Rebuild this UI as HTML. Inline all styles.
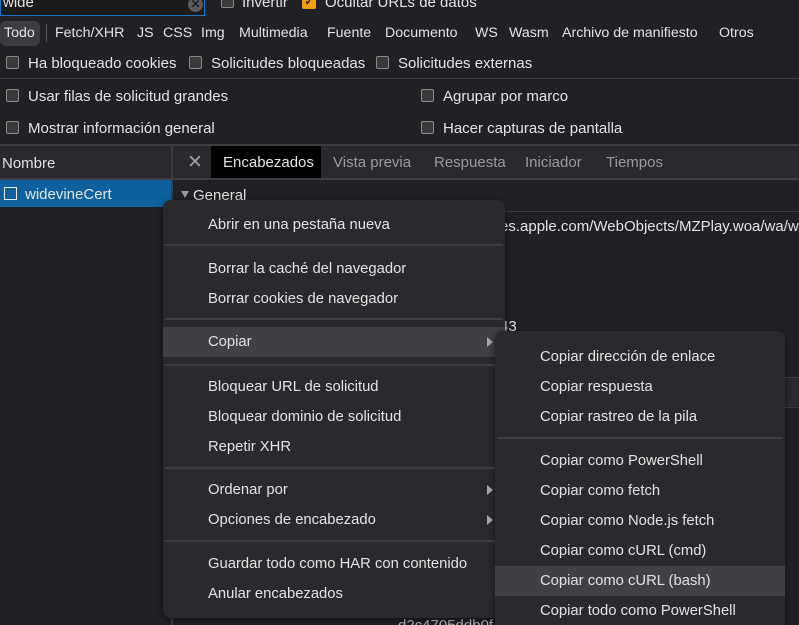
<!DOCTYPE html>
<html><head><meta charset="utf-8"><style>
*{box-sizing:border-box;margin:0;padding:0}
html{width:799px;height:625px;overflow:hidden}
body{width:799px;height:625px;overflow:hidden;background:#202124;font-family:"Liberation Sans",sans-serif;font-size:14.8px;color:#e3e3e3;position:relative}
.a{position:absolute;white-space:nowrap}
.cb{position:absolute;width:13px;height:13px;border:1px solid #8a8a8a;border-radius:2px;background:#3a3a3a}
.hl{position:absolute;height:1px;background:#3d3e42}
.menu{position:absolute;background:#292a2d;border-radius:8px;box-shadow:0 2px 8px rgba(0,0,0,.5);overflow:hidden}
.mi{position:absolute;left:0;right:0;height:30px;line-height:31px;white-space:nowrap}
.sep{position:absolute;left:2px;right:2px;height:2px;background:#3f4044}
.arr{position:absolute;width:0;height:0;border-left:6px solid #a8a8a8;border-top:5px solid transparent;border-bottom:5px solid transparent}
.f{position:absolute;top:25px;font-size:14.2px;white-space:nowrap}
.t{font-size:15px}
</style></head><body>
<div class="a" style="left:0;top:0;width:205px;height:16px;border:1px solid #1a73c8;border-top:none;background:#1b1b1c"></div>
<div class="a t" style="left:3px;top:-6px">wide</div>
<div class="a" style="left:188px;top:-3px;width:15px;height:15px;border-radius:50%;background:#5b5b5e;color:#202124;font-size:12px;line-height:15px;text-align:center;font-weight:bold">✕</div>
<div class="cb" style="left:221px;top:-5px"></div>
<div class="a t" style="left:242px;top:-6px">Invertir</div>
<div class="a" style="left:302px;top:-5px;width:14px;height:14px;background:#f29d0e;border-radius:2px;color:#202124;font-size:11px;line-height:14px;text-align:center;font-weight:bold">✓</div>
<div class="a t" style="left:325px;top:-6px">Ocultar URLs de datos</div>
<div class="a" style="left:0;top:21px;width:40px;height:25px;border-radius:6px;background:#3b3c40"></div>
<div class="f" style="left:4px">Todo</div>
<div class="a" style="left:46px;top:24px;width:1px;height:18px;background:#555"></div>
<div class="f" style="left:55px">Fetch/XHR</div>
<div class="f" style="left:137px">JS</div>
<div class="f" style="left:163px">CSS</div>
<div class="f" style="left:201px">Img</div>
<div class="f" style="left:239px">Multimedia</div>
<div class="f" style="left:327px">Fuente</div>
<div class="f" style="left:385px">Documento</div>
<div class="f" style="left:475px">WS</div>
<div class="f" style="left:509px">Wasm</div>
<div class="f" style="left:562px">Archivo de manifiesto</div>
<div class="f" style="left:719px">Otros</div>
<div class="cb" style="left:6px;top:56px"></div>
<div class="a t" style="left:28px;top:55px">Ha bloqueado cookies</div>
<div class="cb" style="left:189px;top:56px"></div>
<div class="a t" style="left:211px;top:55px">Solicitudes bloqueadas</div>
<div class="cb" style="left:376px;top:56px"></div>
<div class="a t" style="left:398px;top:55px">Solicitudes externas</div>
<div class="hl" style="left:0;top:78px;width:799px"></div>
<div class="cb" style="left:6px;top:89px"></div>
<div class="a t" style="left:28px;top:88px">Usar filas de solicitud grandes</div>
<div class="cb" style="left:421px;top:89px"></div>
<div class="a t" style="left:443px;top:88px">Agrupar por marco</div>
<div class="cb" style="left:6px;top:121px"></div>
<div class="a t" style="left:28px;top:120px">Mostrar información general</div>
<div class="cb" style="left:421px;top:121px"></div>
<div class="a t" style="left:443px;top:120px">Hacer capturas de pantalla</div>
<div class="hl" style="left:0;top:144px;width:799px;height:2px"></div>
<div class="a" style="left:0;top:146px;width:799px;height:32px;background:#292a2d"></div>
<div class="a" style="left:171px;top:146px;width:2px;height:479px;background:#3d3e42"></div>
<div class="a t" style="left:2px;top:155px">Nombre</div>
<div class="a" style="left:187px;top:151px;font-size:19px;color:#9a9a9a">✕</div>
<div class="a" style="left:211px;top:146px;width:110px;height:32px;background:#000"></div>
<div class="a t" style="left:223px;top:154px">Encabezados</div>
<div class="a t" style="left:333px;top:154px;color:#9a9a9a">Vista previa</div>
<div class="a t" style="left:434px;top:154px;color:#9a9a9a">Respuesta</div>
<div class="a t" style="left:525px;top:154px;color:#9a9a9a">Iniciador</div>
<div class="a t" style="left:606px;top:154px;color:#9a9a9a">Tiempos</div>
<div class="hl" style="left:0;top:178px;width:799px;height:2px;background:#3d3e42"></div>
<div class="a" style="left:0;top:180px;width:171px;height:27px;background:#0e619c"></div>
<div class="a" style="left:4px;top:187px;width:13px;height:13px;border:1.5px solid #e8e8e8"></div>
<div class="a t" style="left:25px;top:186px">widevineCert</div>
<div class="a" style="left:181px;top:191px;border-top:7px solid #999;border-left:4px solid transparent;border-right:4px solid transparent"></div>
<div class="a t" style="left:193px;top:187px">General</div>
<div class="hl" style="left:173px;top:211px;width:626px"></div>
<div class="a t" style="left:500px;top:218px">es.apple.com/WebObjects/MZPlay.woa/wa/w</div>
<div class="a t" style="left:500px;top:318px">43</div>
<div class="a" style="left:785px;top:377px;width:14px;height:31px;background:#292a2d;border-top:1px solid #3d3e42;border-bottom:1px solid #3d3e42"></div>
<div class="a t" style="left:398px;top:617px;color:#bbb">d2c4705ddb0f</div>
<div class="menu" style="left:163px;top:200px;width:342px;height:418px">
<div class="mi" style="top:10px;padding-left:45px">Abrir en una pestaña nueva</div>
<div class="sep" style="top:44px"></div>
<div class="mi" style="top:54px;padding-left:45px">Borrar la caché del navegador</div>
<div class="mi" style="top:84px;padding-left:45px">Borrar cookies de navegador</div>
<div class="sep" style="top:118px"></div>
<div class="mi" style="top:127px;background:#404144;padding-left:45px">Copiar</div>
<div class="arr" style="left:324px;top:137px"></div>
<div class="sep" style="top:164px"></div>
<div class="mi" style="top:172px;padding-left:45px">Bloquear URL de solicitud</div>
<div class="mi" style="top:202px;padding-left:45px">Bloquear dominio de solicitud</div>
<div class="mi" style="top:232px;padding-left:45px">Repetir XHR</div>
<div class="sep" style="top:267px"></div>
<div class="mi" style="top:275px;padding-left:45px">Ordenar por</div>
<div class="arr" style="left:324px;top:285px"></div>
<div class="mi" style="top:305px;padding-left:45px">Opciones de encabezado</div>
<div class="arr" style="left:324px;top:315px"></div>
<div class="sep" style="top:340px"></div>
<div class="mi" style="top:349px;padding-left:45px">Guardar todo como HAR con contenido</div>
<div class="mi" style="top:379px;padding-left:45px">Anular encabezados</div>
</div>
<div class="menu" style="left:495px;top:331px;width:290px;height:294px;border-bottom-left-radius:0;border-bottom-right-radius:0">
<div class="mi" style="top:11px;padding-left:45px">Copiar dirección de enlace</div>
<div class="mi" style="top:41px;padding-left:45px">Copiar respuesta</div>
<div class="mi" style="top:71px;padding-left:45px">Copiar rastreo de la pila</div>
<div class="sep" style="top:106px"></div>
<div class="mi" style="top:115px;padding-left:45px">Copiar como PowerShell</div>
<div class="mi" style="top:145px;padding-left:45px">Copiar como fetch</div>
<div class="mi" style="top:175px;padding-left:45px">Copiar como Node.js fetch</div>
<div class="mi" style="top:205px;padding-left:45px">Copiar como cURL (cmd)</div>
<div class="mi" style="top:235px;padding-left:45px;background:#404144">Copiar como cURL (bash)</div>
<div class="mi" style="top:265px;padding-left:45px">Copiar todo como PowerShell</div>
</div>
</body></html>
